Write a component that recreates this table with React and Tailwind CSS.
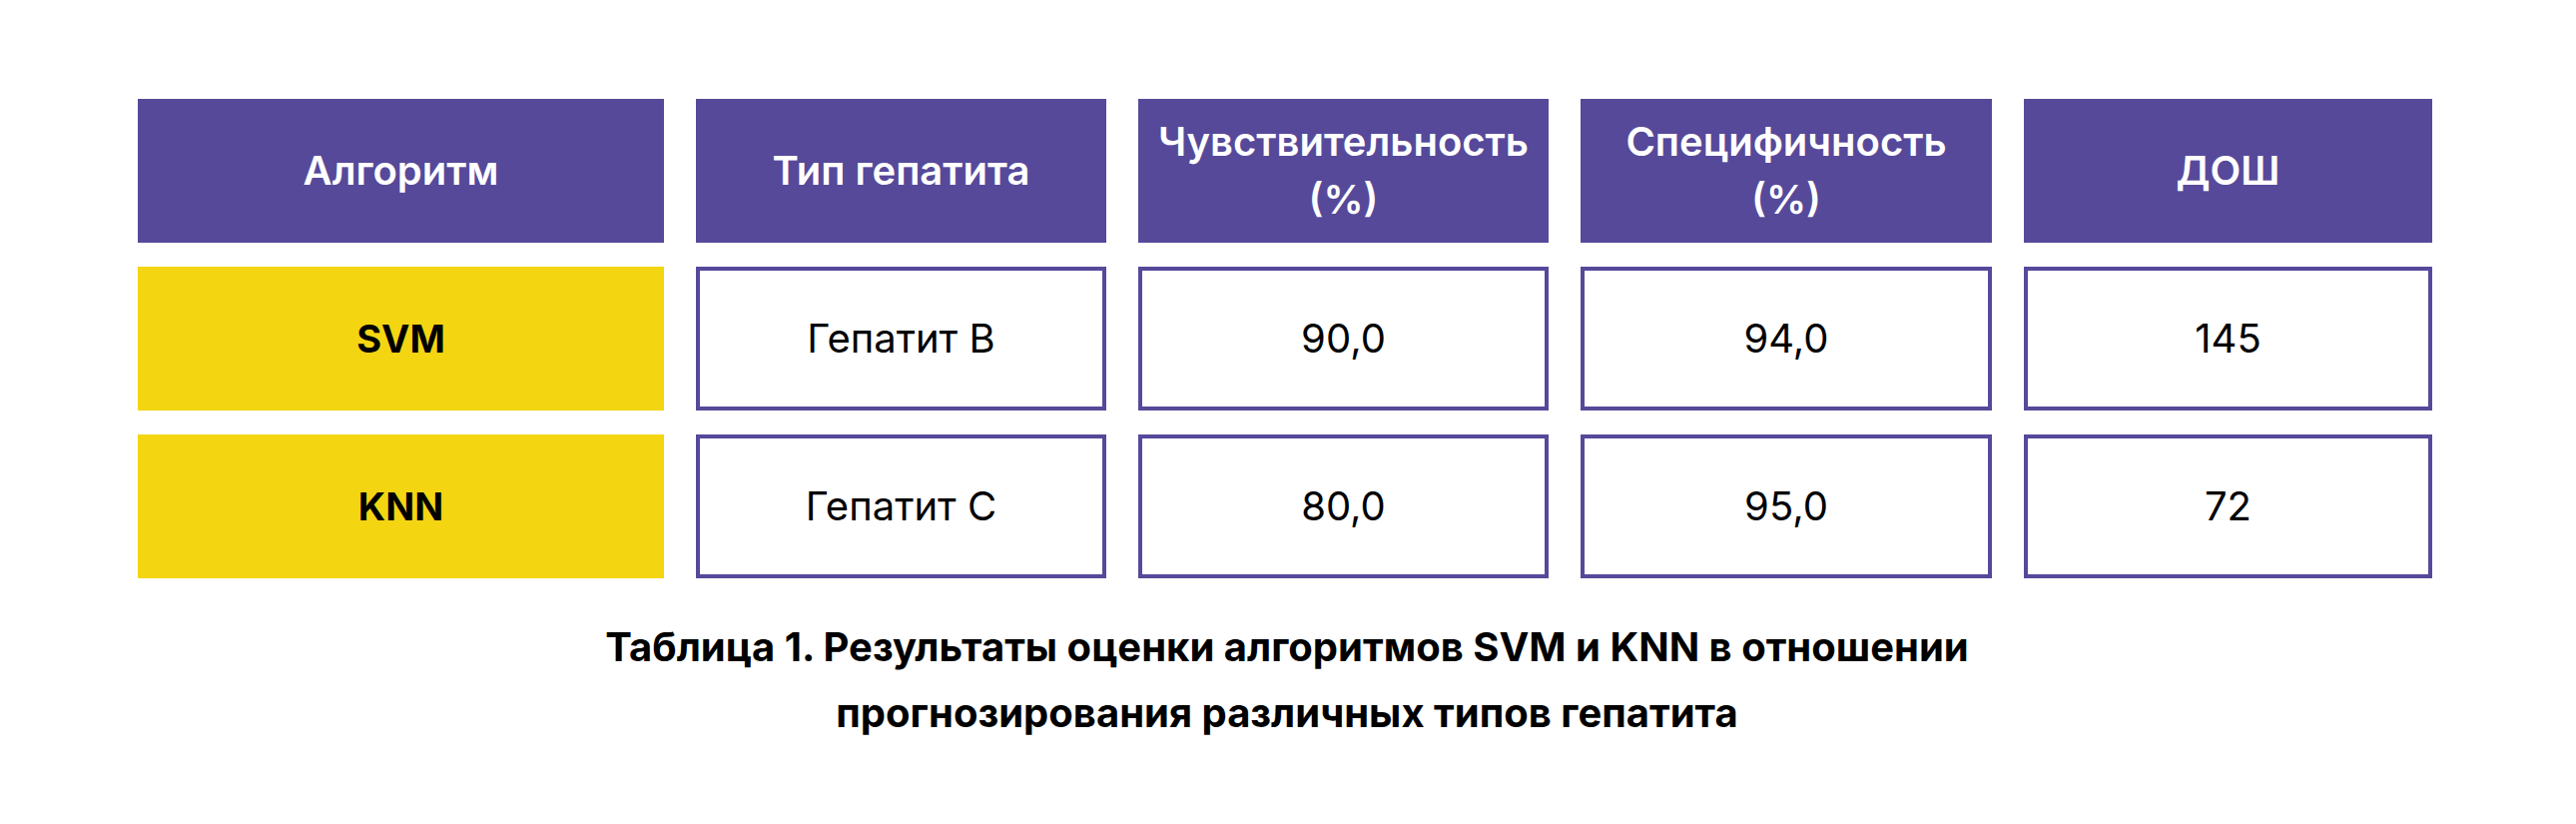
import React from 'react';

const headers = [['Алгоритм'], ['Тип гепатита'], ['Чувствительность', '(%)'], ['Специфичность', '(%)'], ['ДОШ']];

const rows = [
  ['SVM', 'Гепатит B', '90,0', '94,0', '145'],
  ['KNN', 'Гепатит C', '80,0', '95,0', '72'],
];

export default function App() {
  return (
    <div className='w-[2580px] h-[825px] bg-white pt-[99px] pl-[138px]' style={{ fontFamily: 'Inter, "Noto Sans", sans-serif' }}>
      <div className='grid grid-cols-[527px_411px_411px_412px_409px] gap-x-[32px] gap-y-[24px] w-[2302px]'>
        {headers.map((lines, i) => (
          <div key={i} className='h-[144px] bg-[#56499a] flex flex-col items-center justify-center text-white text-[40px] font-semibold leading-[58px] text-center'>
            {lines.map((l) => (
              <span key={l}>{l}</span>
            ))}
          </div>
        ))}
        {rows.map((row) =>
          row.map((cell, j) =>
            j === 0 ? (
              <div key={cell} className='h-[144px] bg-[#f4d512] flex items-center justify-center text-black text-[38px] font-bold'>
                {cell}
              </div>
            ) : (
              <div key={cell + j} className='h-[144px] border-4 border-[#56499a] flex items-center justify-center text-black text-[40px]'>
                {cell}
              </div>
            )
          )
        )}
      </div>
      <div className='w-[2302px] mt-[36px] text-center text-black text-[40px] font-bold leading-[66px]'>
        <p>Таблица 1. Результаты оценки алгоритмов SVM и KNN в отношении</p>
        <p>прогнозирования различных типов гепатита</p>
      </div>
    </div>
  );
}
